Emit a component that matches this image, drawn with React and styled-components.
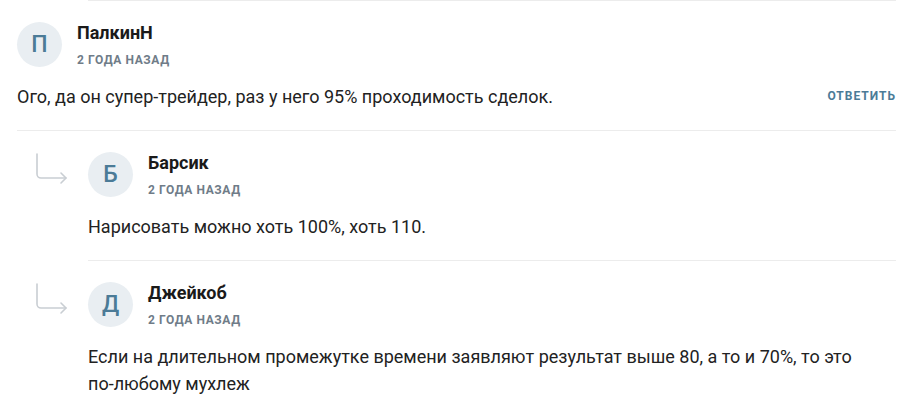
import React from "react";
import styled, { createGlobalStyle } from "styled-components";

const GlobalStyle = createGlobalStyle`
    body {
        margin: 0;
        background: #fff;
        font-family: Roboto, "Liberation Sans", sans-serif;
        color: #222;
    }
`

const ListStyled = styled.div`
    padding: 0 28px 0 17px;
`

const Divider = styled.div`
    height: 1px;
    background: #ececec;
    margin-left: ${props => props.indent || 0}px;
`

const ItemStyled = styled.div`
    display: flex;
    padding: 21px 0 20px;
    margin-left: ${props => props.indent || 0}px;
`

const ArrowCol = styled.div`
    width: 71px;
    flex-shrink: 0;
    margin-left: -71px;
    padding: 0 0 0 19px;
    box-sizing: border-box;
`

const BodyStyled = styled.div`
    flex: 1;
    min-width: 0;
`

const HeaderStyled = styled.div`
    display: flex;
    align-items: center;
    gap: 15px;
    height: 45px;
    margin-bottom: 16px;
`

const Avatar = styled.div`
    width: 45px;
    height: 45px;
    border-radius: 50%;
    background: #e9eef2;
    color: #4b7b97;
    display: flex;
    align-items: center;
    justify-content: center;
    font-size: 23px;
    font-weight: 500;
`

const Info = styled.div`
    display: flex;
    flex-direction: column;
    gap: 10px;
`

const Name = styled.div`
    font-size: 18px;
    line-height: 20px;
    font-weight: 700;
    color: #1a1a1a;
`

const DateText = styled.div`
    font-size: 12px;
    line-height: 14px;
    font-weight: 700;
    letter-spacing: 0.6px;
    text-transform: uppercase;
    color: #6f7c88;
`

const TextRow = styled.div`
    display: flex;
    justify-content: space-between;
    align-items: flex-start;
`

const Text = styled.p`
    margin: 0;
    font-size: 18px;
    line-height: 27px;
    color: #222;
    max-width: 780px;
`

const ReplyBtn = styled.span`
    font-size: 12px;
    line-height: 27px;
    font-weight: 700;
    letter-spacing: 1px;
    color: #4b7b97;
    text-transform: uppercase;
    cursor: pointer;
    flex-shrink: 0;
`

const ReplyArrow = () => (
    <svg width="34" height="34" viewBox="0 0 34 34" fill="none" stroke="#c9ced3" strokeWidth="1.6" strokeLinecap="round" strokeLinejoin="round">
        <path d="M1 2v20a4 4 0 0 0 4 4h25" />
        <path d="M25 21l5 5-5 5" />
    </svg>
)

const comments = [
    { id: 1, letter: "П", name: "ПалкинН", date: "2 года назад", text: "Ого, да он супер-трейдер, раз у него 95% проходимость сделок.", reply: true },
    { id: 2, letter: "Б", name: "Барсик", date: "2 года назад", text: "Нарисовать можно хоть 100%, хоть 110.", child: true },
    { id: 3, letter: "Д", name: "Джейкоб", date: "2 года назад", text: "Если на длительном промежутке времени заявляют результат выше 80, а то и 70%, то это по-любому мухлеж", child: true },
]

const Comment = ({ c }) => (
    <ItemStyled indent={c.child ? 71 : 0}>
        {c.child && <ArrowCol><ReplyArrow /></ArrowCol>}
        <BodyStyled>
            <HeaderStyled>
                <Avatar>{c.letter}</Avatar>
                <Info>
                    <Name>{c.name}</Name>
                    <DateText>{c.date}</DateText>
                </Info>
            </HeaderStyled>
            <TextRow>
                <Text>{c.text}</Text>
                {c.reply && <ReplyBtn>Ответить</ReplyBtn>}
            </TextRow>
        </BodyStyled>
    </ItemStyled>
)

const App = () => {
    return (<>
        <GlobalStyle />
        <ListStyled>
            <Divider indent={71} />
            {comments.map((c, i) => <React.Fragment key={c.id}>
                <Comment c={c} />
                {i < comments.length - 1 && <Divider indent={c.child ? 71 : 0} />}
            </React.Fragment>)}
        </ListStyled>
    </>)
}

export default App;
